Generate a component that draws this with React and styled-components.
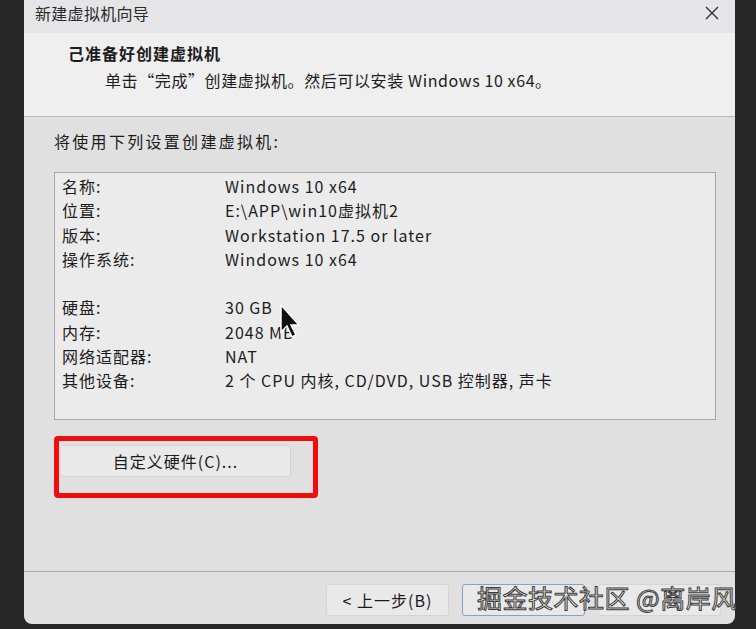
import React from "react";
import styled, { createGlobalStyle } from "styled-components";

const GlobalStyle = createGlobalStyle`
  html, body {
    margin: 0;
    padding: 0;
    background: #272727;
    font-family: "Noto Sans CJK SC", "Noto Sans", "Liberation Sans", sans-serif;
  }
`;

const Screen = styled.div`
  width: 756px;
  height: 629px;
  display: flex;
  align-items: flex-start;
  padding-left: 24px;
  padding-right: 21px;
  box-sizing: border-box;
  overflow: hidden;
  position: relative;
`;

const Window = styled.div`
  flex: 1;
  height: 624px;
  display: flex;
  flex-direction: column;
  background: #e0e0e0;
  border-bottom-left-radius: 8px;
  border-bottom-right-radius: 8px;
  position: relative;
  color: #1c1c1c;
  font-size: 16px;
  letter-spacing: 1px;
`;

const TitleBar = styled.div`
  height: 33px;
  box-sizing: border-box;
  display: flex;
  align-items: center;
  justify-content: space-between;
  padding: 0 16px 7px 11px;
  background: #e5e5e7;
  color: #2a2a2a;
  letter-spacing: 0.3px;
`;

const Header = styled.div`
  height: 84px;
  background: #efefef;
  border-bottom: 1px solid #b9b9b9;
  padding: 8px 0 0 44px;
  box-sizing: border-box;
`;

const HeaderTitle = styled.div`
  font-weight: 700;
  line-height: 24px;
`;

const HeaderText = styled.div`
  line-height: 24px;
  margin-top: 3px;
  padding-left: 37px;
  letter-spacing: 0.6px;
`;

const Body = styled.div`
  flex: 1;
  padding: 12px 19px 0 30px;
  display: flex;
  flex-direction: column;
`;

const Intro = styled.div`
  line-height: 24px;
  margin-bottom: 19px;
  letter-spacing: 2.3px;
`;

const ListBox = styled.div`
  height: 248px;
  background: #ebebeb;
  border: 1px solid #a9a9a9;
  box-sizing: border-box;
  padding: 1px 0 0 7px;
  display: flex;
  flex-direction: column;
`;

const Row = styled.div`
  display: grid;
  grid-template-columns: 163px 1fr;
  height: 24.3px;
  align-items: center;
  margin-top: ${(p) => (p.$gap ? "24px" : "0")};
`;

const Highlight = styled.div`
  margin-top: 16px;
  width: 264px;
  height: 62px;
  border: 5px solid #f20d0d;
  border-radius: 4px;
  box-sizing: border-box;
  padding: 4px 0 0 1px;
`;

const Button = styled.button`
  width: ${(p) => p.$w || "123px"};
  height: 32px;
  background: #e9e9e9;
  border: 1px solid ${(p) => (p.$focus ? "#7fa6c6" : "#d4d4d4")};
  border-radius: 3px;
  font-family: inherit;
  font-size: 16px;
  letter-spacing: 1px;
  color: #1c1c1c;
  padding: 0;
`;

const Footer = styled.div`
  height: 53px;
  box-sizing: border-box;
  border-top: 1px solid #a8a8a8;
  display: flex;
  justify-content: flex-end;
  align-items: flex-start;
  gap: 13px;
  padding: 12px 14px 0 0;
`;

const Watermark = styled.div`
  position: absolute;
  left: 477px;
  top: 579px;
  font-size: 25px;
  letter-spacing: 0.5px;
  color: #efefef;
  -webkit-text-stroke: 1px #3a3a3a;
  white-space: nowrap;
`;

const Cursor = styled.svg`
  position: absolute;
  left: 280px;
  top: 304px;
`;

const rows = [
  ["名称:", "Windows 10 x64"],
  ["位置:", "E:\\APP\\win10虚拟机2"],
  ["版本:", "Workstation 17.5 or later"],
  ["操作系统:", "Windows 10 x64"],
  ["硬盘:", "30 GB", true],
  ["内存:", "2048 MB"],
  ["网络适配器:", "NAT"],
  ["其他设备:", "2 个 CPU 内核, CD/DVD, USB 控制器, 声卡"],
];

export default function App() {
  return (
    <>
      <GlobalStyle />
      <Screen>
        <Window>
          <TitleBar>
            <span>新建虚拟机向导</span>
            <svg width="14" height="14" viewBox="0 0 14 14">
              <path d="M1 1L13 13M13 1L1 13" stroke="#333" strokeWidth="1.4" />
            </svg>
          </TitleBar>
          <Header>
            <HeaderTitle>己准备好创建虚拟机</HeaderTitle>
            <HeaderText>单击“完成”创建虚拟机。然后可以安装 Windows 10 x64。</HeaderText>
          </Header>
          <Body>
            <Intro>将使用下列设置创建虚拟机:</Intro>
            <ListBox>
              {rows.map(([k, v, gap]) => (
                <Row key={k} $gap={gap}>
                  <span>{k}</span>
                  <span>{v}</span>
                </Row>
              ))}
            </ListBox>
            <Highlight>
              <Button $w="231px">自定义硬件(C)...</Button>
            </Highlight>
          </Body>
          <Footer>
            <Button>&lt; 上一步(B)</Button>
            <Button $focus aria-label="完成" />
            <Button aria-label="取消" />
          </Footer>
        </Window>
        <Cursor width="22" height="36" viewBox="0 0 22 36">
          <path d="M1 1L1 28L7 22L12 33L16 31L11 21L19 21Z" fill="#111" stroke="#fff" strokeWidth="1.5" />
        </Cursor>
        <Watermark>掘金技术社区 @离岸风</Watermark>
      </Screen>
    </>
  );
}
